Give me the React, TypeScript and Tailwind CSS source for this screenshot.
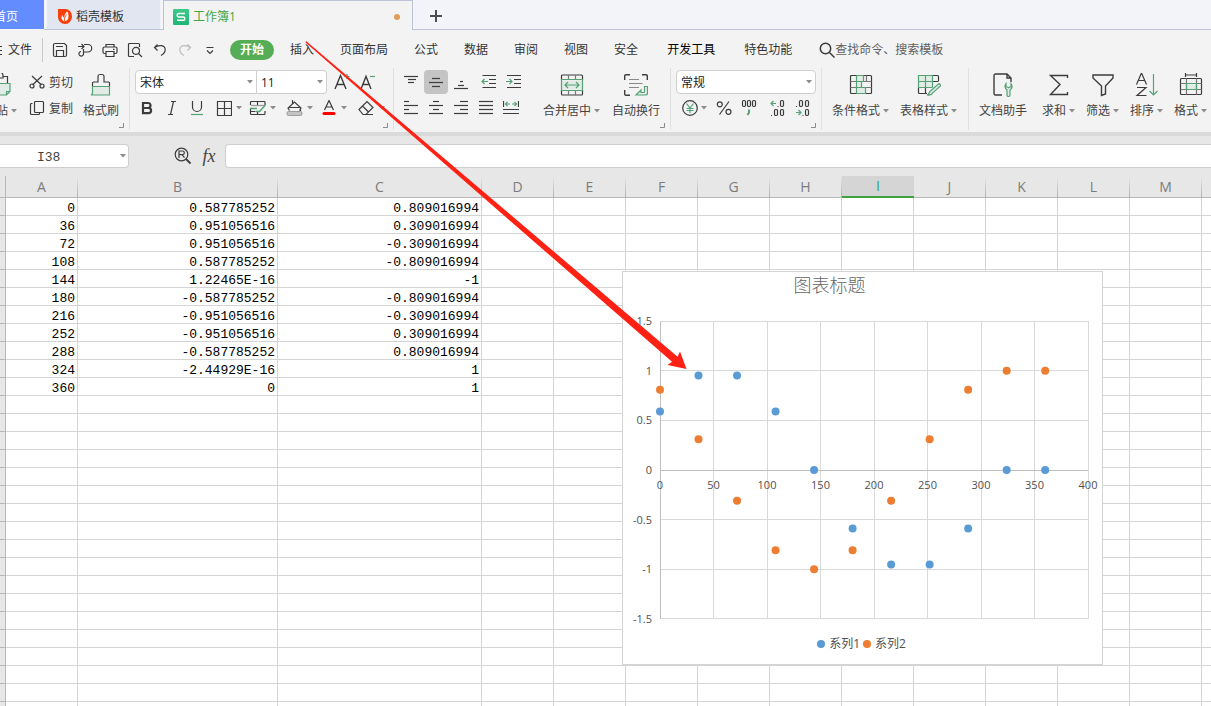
import React from "react";

const INK = "#3c3c3c";
const GREEN = "#55a277";
const TINT = "#e3ebe6";

type IconProps = { w?: number; h?: number; children: React.ReactNode };

function Icon({ w = 16, h = 16, children }: IconProps) {
  return (
    <svg
      width={w}
      height={h}
      viewBox={`0 0 ${w} ${h}`}
      fill="none"
      stroke={INK}
      strokeWidth={1.2}
      className="shrink-0"
      aria-hidden="true"
    >
      {children}
    </svg>
  );
}

function Caret() {
  return (
    <svg width="6" height="4" viewBox="0 0 6 4" fill="#8c8c8c" className="shrink-0" aria-hidden="true">
      <path d="M0 0h6L3 3.5z" />
    </svg>
  );
}

/* ---------- title tabs ---------- */

function TabBar() {
  return (
    <div role="tablist" className="flex h-[30px] shrink-0 bg-[#f2f4f9] text-xs">
      <button
        role="tab"
        aria-selected="false"
        className="mb-px flex w-11 items-center justify-end overflow-hidden bg-[#638dff] pt-1 pr-[26px] whitespace-nowrap text-white"
      >
        首页
      </button>
      <div className="w-[3px] border-b border-[#bcc3d7]" />
      <button
        role="tab"
        aria-selected="false"
        className="flex w-[113px] items-center gap-1 border-b border-[#bcc3d7] bg-[#e2e6f0] pt-1 pl-[11px] text-[#333]"
      >
        <svg width="14" height="15" viewBox="0 0 14 15" aria-hidden="true">
          <path d="M0 0h7.5a6.5 7.5 0 0 1 0 15H7a7 7 0 0 1-7-7z" fill="#f8400c" />
          <path d="M9.5 2.5C7 4 6 6.500 6.500 9 5.500 8.400 4.500 7.200 4.300 6 2.700 8.500 3.500 11.500 6.500 12.300 10.500 11.800 11.500 8 9.500 2.500z" fill="#fff" />
          <path d="M6.500 12.500V9l2-3.500" stroke="#f8400c" strokeWidth=".8" fill="none" />
        </svg>
        <span>稻壳模板</span>
      </button>
      <div className="w-[3px] border-b border-[#bcc3d7]" />
      <button
        role="tab"
        aria-selected="true"
        className="flex w-[250px] items-center gap-1 border-x border-t border-[#bcc3d7] bg-[#f3f3f3] pt-[3px] pr-3 pl-[9px] text-[#45a545]"
      >
        <svg width="16" height="16" viewBox="0 0 16 16" aria-hidden="true">
          <defs>
            <linearGradient id="sheetMark" x1="0" y1="0" x2="0" y2="1">
              <stop offset="0" stopColor="#3cca8a" />
              <stop offset="1" stopColor="#20b477" />
            </linearGradient>
          </defs>
          <rect width="16" height="16" rx="1" fill="url(#sheetMark)" />
          <path d="M12 4.500H5.500a1.200 1.200 0 0 0-1.200 1.200v1a1.200 1.200 0 0 0 1.200 1.200h5a1.200 1.200 0 0 1 1.200 1.200v1a1.200 1.200 0 0 1-1.200 1.200H4" fill="none" stroke="#fff" strokeWidth="1.500" />
        </svg>
        <span className="flex-1 text-left">工作簿1</span>
        <span className="size-1.5 rounded-full bg-[#e29d59]" />
      </button>
      <div className="flex flex-1 items-center border-b border-[#bcc3d7] pt-[3px] pl-4">
        <button aria-label="新建标签">
          <svg width="14" height="14" viewBox="0 0 14 14" stroke="#4d4d4d" strokeWidth="2" aria-hidden="true">
            <path d="M7 1v12M1 7h12" />
          </svg>
        </button>
      </div>
    </div>
  );
}

/* ---------- menu row ---------- */

const quickActions: { label: string; icon: React.ReactNode }[] = [
  {
    label: "保存",
    icon: (
      <Icon>
        <path d="M1.500 3a1.500 1.500 0 0 1 1.500-1.500h9.500l2 2V13a1.500 1.500 0 0 1-1.500 1.500H3A1.500 1.500 0 0 1 1.500 13zM4.500 14.500V8.500h7v6M4 4.500h7" />
      </Icon>
    ),
  },
  {
    label: "输出为PDF",
    icon: (
      <Icon>
        <path d="M1 4.500h6M4.500 2L7 4.500 4.500 7M7 2.500h4a3.700 3.700 0 0 1 0 7.500H6.500V7M6.500 10v1.500a2.300 2.300 0 1 1-2.500-2" />
      </Icon>
    ),
  },
  {
    label: "打印",
    icon: (
      <Icon>
        <path d="M4 5V2.500h8V5M3.500 11.500H2.500a1.500 1.500 0 0 1-1.500-1.500V6.500A1.500 1.500 0 0 1 2.500 5h11A1.500 1.500 0 0 1 15 6.500V10a1.500 1.500 0 0 1-1.500 1.500h-1M4 9.500h8v5H4zM11 7.300h1.500" />
      </Icon>
    ),
  },
  {
    label: "打印预览",
    icon: (
      <Icon>
        <path d="M7 14.500H2.500a1 1 0 0 1-1-1v-11a1 1 0 0 1 1-1h9a1 1 0 0 1 1 1V5M11.500 11.500l3.500 3.500" />
        <circle cx="9" cy="8.800" r="3.500" />
      </Icon>
    ),
  },
  {
    label: "撤销",
    icon: (
      <Icon>
        <path d="M5.500 2.500L2.500 5.500l3 3M2.500 5.500C7 2.500 13 3 13.200 7.500c.2 2.500-1.700 4.500-4.200 6" />
      </Icon>
    ),
  },
  {
    label: "恢复",
    icon: (
      <Icon>
        <path stroke="#bdbdbd" d="M10.500 2.500l3 3-3 3M13.500 5.500C9 2.500 3 3 2.800 7.500c-.2 2.500 1.700 4.500 4.200 6" />
      </Icon>
    ),
  },
  {
    label: "自定义快速访问工具栏",
    icon: (
      <Icon>
        <path d="M4.500 5.500h7M5 8.500l3 3 3-3" />
      </Icon>
    ),
  },
];

const menus = ["插入", "页面布局", "公式", "数据", "审阅", "视图", "安全"];

function MenuBar() {
  return (
    <div className="flex h-9 shrink-0 items-center overflow-hidden bg-[#f3f3f3] pt-[3px] text-xs whitespace-nowrap text-[#333]">
      <button className="flex items-center gap-[5px]">
        <svg width="3" height="12" viewBox="0 0 3 12" stroke={INK} aria-hidden="true">
          <path d="M0 2.500h2M0 6.500h2M0 10.500h2" />
        </svg>
        文件
      </button>
      <div className="ml-[10px] h-6 w-px bg-[#c9c9c9]" />
      <div className="ml-[9px] flex items-center gap-[9px]">
        {quickActions.map((a) => (
          <button key={a.label} aria-label={a.label}>
            {a.icon}
          </button>
        ))}
      </div>
      <button className="ml-3 h-5 w-11 rounded-full bg-[#55ae55] font-bold text-white">开始</button>
      <nav className="ml-[3px] flex">
        {menus.map((m) => (
          <button key={m} className="px-[13px]">
            {m}
          </button>
        ))}
        <button className="px-4 text-black">开发工具</button>
        <button className="px-[13px]">特色功能</button>
      </nav>
      <label className="ml-[14px] flex items-center">
        <Icon>
          <g strokeWidth="1.500">
            <circle cx="6.500" cy="6.500" r="5.200" />
            <path d="M10.500 10.500l5 5" />
          </g>
        </Icon>
        <input
          type="text"
          placeholder="查找命令、搜索模板"
          aria-label="查找命令、搜索模板"
          className="w-36 bg-transparent placeholder:text-[#606060] focus:outline-none"
        />
      </label>
    </div>
  );
}

/* ---------- ribbon ---------- */

function Group({ className, corner, children }: { className: string; corner?: boolean; children: React.ReactNode }) {
  return (
    <section className={`relative flex shrink-0 pt-1 ${className}`}>
      {children}
      {corner && (
        <svg
          width="5"
          height="5"
          viewBox="0 0 5 5"
          fill="none"
          stroke="#8a8a8a"
          className="absolute right-[5px] bottom-1"
          aria-hidden="true"
        >
          <path d="M4.500 0v4.500H0" />
        </svg>
      )}
    </section>
  );
}

function Divider() {
  return <div className="mt-0.5 h-[62px] w-px shrink-0 bg-[#e0e0e0]" />;
}

function Tool({ label, className, children }: { label: string; className: string; children: React.ReactNode }) {
  return (
    <button aria-label={label} className={`flex h-6 shrink-0 items-center justify-center ${className}`}>
      {children}
    </button>
  );
}

function BigTool({ label, caret, children }: { label: string; caret?: boolean; children: React.ReactNode }) {
  return (
    <button className="flex shrink-0 flex-col items-center gap-[5px] pt-[3px]">
      {children}
      <span className="flex items-center gap-[3px] leading-[17px] whitespace-nowrap">
        {label}
        {caret && <Caret />}
      </span>
    </button>
  );
}

function Dropdown({ label, value, className }: { label: string; value: string; className: string }) {
  return (
    <div className={`relative flex h-6 items-center border border-[#cfcfcf] bg-white ${className}`}>
      <select
        aria-label={label}
        defaultValue={value}
        className="h-full w-full appearance-none bg-transparent pt-0.5 pl-1 text-xs text-[#222] focus:outline-none"
      >
        <option>{value}</option>
      </select>
      <span className="pointer-events-none absolute right-[3px]">
        <Caret />
      </span>
    </div>
  );
}

function Lines({ rows, w = 14 }: { rows: [number, number, number][]; w?: number }) {
  return (
    <Icon w={w} h={16}>
      {rows.map(([y, a, b]) => (
        <path key={y} d={`M${a} ${y}.5H${b}`} />
      ))}
    </Icon>
  );
}

function ClipboardGroup() {
  return (
    <Group className="w-[129px]" corner>
      <button aria-label="粘贴" className="flex w-[17px] flex-col items-end gap-[5px] overflow-hidden pt-[3px]">
        <span className="-mr-0 block pr-[5px]">
          <Icon w={24} h={24}>
            <path d="M3.500 22V3.500H8M15 3.500h4.500V10M8 5V2.500a3 3 0 0 1 7 0V5z" />
            <path stroke={GREEN} fill={TINT} d="M8.500 10.500h13.500v8l-3.500 3.500H8.500zM18.500 22v-3.500H22" />
          </Icon>
        </span>
        <span className="flex items-center gap-[3px] leading-[17px] whitespace-nowrap">
          粘贴
          <Caret />
        </span>
      </button>
      <div className="ml-3 flex flex-col gap-0.5">
        <button className="flex h-6 items-center gap-1">
          <Icon>
            <path d="M3 2l9.500 9M13 2L3.500 11" />
            <circle cx="3" cy="12" r="2" />
            <circle cx="13" cy="12" r="2" />
          </Icon>
          <span className="pt-0.5">剪切</span>
        </button>
        <button className="flex h-6 items-center gap-1">
          <Icon>
            <rect x="5.500" y="1.500" width="9" height="11" rx="1" />
            <path d="M3.500 3.500h-1a1 1 0 0 0-1 1v9a1 1 0 0 0 1 1h7a1 1 0 0 0 1-1v-1" />
          </Icon>
          <span className="pt-0.5">复制</span>
        </button>
      </div>
      <div className="ml-[10px] flex">
        <BigTool label="格式刷">
          <Icon w={24} h={24}>
            <path fill={TINT} stroke="none" d="M3 13h18v9H3z" />
            <path d="M3.500 13v-3a1 1 0 0 1 1-1H9V3.500a2 2 0 0 1 2-2h2a2 2 0 0 1 2 2V9h4.500a1 1 0 0 1 1 1v3" />
            <path stroke={GREEN} d="M3.500 13.500h17v8.500H2c1-.5 1.500-1 1.500-2z" />
          </Icon>
        </BigTool>
      </div>
    </Group>
  );
}

function FontGroup() {
  return (
    <Group className="w-[263px] flex-col gap-0.5 pl-[5px]" corner>
      <div className="flex">
        <Dropdown label="字体" value="宋体" className="w-[122px] rounded-l" />
        <Dropdown label="字号" value="11" className="w-[70px] rounded-r border-l-0" />
        <Tool label="增大字号" className="ml-px w-[26px]">
          <Icon w={18} h={18}>
            <path strokeWidth="1.400" d="M3 16L8.500 2.500 14 16M5 11.500h7" />
            <path stroke={GREEN} d="M15 1v5M12.500 3.500h5" />
          </Icon>
        </Tool>
        <Tool label="减小字号" className="w-[26px]">
          <Icon w={18} h={18}>
            <path strokeWidth="1.400" d="M3 16L8 3.500 13 16M5 11.500h6" />
            <path stroke={GREEN} d="M12 3.500h5" />
          </Icon>
        </Tool>
      </div>
      <div className="flex">
        <Tool label="加粗" className="w-6">
          <Icon>
            <path strokeWidth="2.200" d="M4 3h5a2.400 2.400 0 0 1 0 5H4zM4 8h5.500a2.600 2.600 0 0 1 0 5.200H4z" />
          </Icon>
        </Tool>
        <Tool label="倾斜" className="w-[26px]">
          <Icon>
            <path d="M7 1.500h5M4 14.500h5M9.500 1.500l-3 13" />
          </Icon>
        </Tool>
        <Tool label="下划线" className="w-6">
          <Icon>
            <path d="M3.500 1v6a4.500 4.500 0 0 0 9 0V1" />
            <path stroke={GREEN} d="M2 14.500h12" />
          </Icon>
        </Tool>
        <Tool label="边框" className="ml-[5px] w-[29px] gap-1">
          <Icon>
            <path d="M1.500 1.500h14v14h-14zM8.500 1.500v14M1.500 8.500h14" />
          </Icon>
          <Caret />
        </Tool>
        <Tool label="绘图边框" className="ml-[5px] w-[29px] gap-1">
          <Icon w={17}>
            <path d="M16 5V2.500a1 1 0 0 0-1-1H2.500a1 1 0 0 0-1 1V5M8.500 1.500v4M1.500 8v5.500a1 1 0 0 0 1 1H15a1 1 0 0 0 1-1V11M1.500 11.500h5M8.500 11v3.500" />
            <path stroke="#999" d="M2 5.500h13" />
            <path stroke={GREEN} strokeWidth="1.500" d="M1 8.500h7M16.500 5l-6 6.500H7" />
          </Icon>
          <Caret />
        </Tool>
        <Tool label="填充颜色" className="ml-2 w-[29px] gap-1">
          <Icon w={17}>
            <path d="M3.500 10.500L2 8l6.500-6L15 8l-1.500 2.500M2.500 7.500h12M6.500 0v4M14.500 7.500V11" />
            <rect x="1" y="11.500" width="15" height="4" rx="1.500" fill="#c4c4c4" stroke="#8d8d8d" strokeWidth=".8" />
          </Icon>
          <Caret />
        </Tool>
        <Tool label="字体颜色" className="ml-[5px] w-[29px] gap-1">
          <Icon>
            <path d="M3.500 10L8 .5l4.500 9.500M5 7h6" />
            <path stroke="#fe0000" strokeWidth="3" strokeLinecap="round" d="M3 13.500h10" />
          </Icon>
          <Caret />
        </Tool>
        <Tool label="清除" className="ml-2 w-[29px] gap-1">
          <Icon w={18}>
            <path d="M2 9.500l8-8 6 6-7 7H6zM5.500 6l6 6M6 14.500h10" />
          </Icon>
          <Caret />
        </Tool>
      </div>
    </Group>
  );
}

function AlignGroup() {
  return (
    <Group className="w-[276px] pl-1" corner>
      <div className="flex flex-col gap-0.5">
        <div className="flex">
          <Tool label="顶端对齐" className="w-[26px]">
            <Lines rows={[[2, 0, 14], [5, 4, 12], [8, 4, 10]]} />
          </Tool>
          <Tool label="垂直居中" className="w-6 rounded bg-[#c4c4c4]">
            <Lines rows={[[4, 3, 11], [8, 0, 14], [12, 3, 11]]} />
          </Tool>
          <Tool label="底端对齐" className="w-[26px]">
            <Lines rows={[[7, 6, 9], [11, 4, 10], [14, 0, 14]]} />
          </Tool>
          <Tool label="减少缩进量" className="ml-[3px] w-6">
            <Icon>
              <path d="M1.500 1.500H15M8 5.500h7M8 9.500h7M1.500 13.500H15" />
              <path stroke={GREEN} d="M7 7.500H1M3.500 5L1 7.500 3.500 10" />
            </Icon>
          </Tool>
          <Tool label="增加缩进量" className="w-[26px]">
            <Icon>
              <path d="M1 1.500h14M8 5.500h7M8 9.500h7M1 13.500h14" />
              <path stroke={GREEN} d="M0 7.500h6M3.500 5L6 7.500 3.500 10" />
            </Icon>
          </Tool>
        </div>
        <div className="flex">
          <Tool label="左对齐" className="w-[26px]">
            <Lines rows={[[1, 0, 5], [5, 0, 14], [9, 0, 5], [13, 0, 14]]} />
          </Tool>
          <Tool label="水平居中" className="w-6">
            <Lines rows={[[1, 4, 10], [5, 0, 14], [9, 4, 10], [13, 0, 14]]} />
          </Tool>
          <Tool label="右对齐" className="w-[26px]">
            <Lines rows={[[1, 6, 14], [5, 0, 14], [9, 6, 14], [13, 0, 14]]} />
          </Tool>
          <Tool label="两端对齐" className="w-6">
            <Lines rows={[[1, 0, 14], [5, 0, 14], [9, 0, 14], [13, 0, 14]]} />
          </Tool>
          <Tool label="分散对齐" className="w-[26px]">
            <Icon>
              <path d="M.5 1v6M15.500 1v6M0 9.500h16M0 13.500h16" />
              <path stroke={GREEN} d="M2.500 4H7M9 4h4.500M4.500 2l-2 2 2 2M11.500 2l2 2-2 2" />
            </Icon>
          </Tool>
        </div>
      </div>
      <div className="ml-4 flex gap-3">
        <BigTool label="合并居中" caret>
          <Icon w={24} h={24}>
            <path stroke="none" fill={TINT} d="M1.500 7.500h21v9h-21z" />
            <path d="M1.500 7V3a1 1 0 0 1 1-1h19a1 1 0 0 1 1 1v4M1.500 17v4a1 1 0 0 0 1 1h19a1 1 0 0 0 1-1v-4" />
            <path stroke="#777" d="M8.500 2v5M15.500 2v5M8.500 17v5M15.500 17v5" />
            <path stroke={GREEN} d="M1.500 6.500h21v11h-21zM5 12h14M8 9l-3 3 3 3M16 9l3 3-3 3" />
          </Icon>
        </BigTool>
        <BigTool label="自动换行">
          <Icon w={24} h={24}>
            <path strokeWidth="1.400" d="M.7 7V3a1.300 1.300 0 0 1 1.300-1.300H6M18 1.700h4A1.300 1.300 0 0 1 23.300 3v4M.7 17v4A1.300 1.300 0 0 0 2 22.300h4" />
            <path stroke="#888" d="M5 6.500h10M5 10.500h13.500M5 14.500h10" />
            <path stroke={GREEN} fill={TINT} d="M20.500 13.500h3V20a2 2 0 0 1-2 2H12l5-5v2.500h2.500a1 1 0 0 0 1-1z" />
          </Icon>
        </BigTool>
      </div>
    </Group>
  );
}

function NumberGroup() {
  return (
    <Group className="w-[150px] flex-col gap-0.5 pl-[5px]" corner>
      <Dropdown label="数字格式" value="常规" className="w-[140px] rounded" />
      <div className="flex items-center">
        <Tool label="货币" className="w-[34px] gap-[3px] pl-[3px]">
          <Icon>
            <circle cx="8" cy="8" r="7.300" />
            <path stroke={GREEN} d="M4.500 3.500L8 8l3.500-4.500M4.500 8.500h7M4.500 10.500h7M8 8v5" />
          </Icon>
          <Caret />
        </Tool>
        <Tool label="百分比" className="ml-0.5 w-6">
          <Icon>
            <circle cx="3.800" cy="4.300" r="2.500" />
            <circle cx="12.500" cy="11.800" r="2.500" />
            <path d="M13 1.500L3.500 14.500" />
          </Icon>
        </Tool>
        <Tool label="千位分隔样式" className="w-[26px]">
          <Icon h={18}>
            <rect x="1.500" y="1.500" width="3" height="6" rx="1.200" />
            <rect x="6.500" y="1.500" width="3" height="6" rx="1.200" />
            <rect x="11.500" y="1.500" width="3" height="6" rx="1.200" />
            <path stroke={GREEN} strokeWidth="2" d="M8 10.500v3L6.500 16" />
          </Icon>
        </Tool>
        <Tool label="增加小数位数" className="ml-[3px] w-[26px]">
          <Icon h={18}>
            <path stroke={GREEN} d="M6 4.500H1M3.500 2L1 4.500 3.500 7" />
            <path d="M7.500 7.500h1M1 16.500h1" />
            <rect x="10.500" y="1.500" width="3" height="6" rx="1.200" />
            <rect x="4.500" y="10.500" width="3" height="6" rx="1.200" />
            <rect x="10.500" y="10.500" width="3" height="6" rx="1.200" />
          </Icon>
        </Tool>
        <Tool label="减少小数位数" className="w-6">
          <Icon h={18}>
            <path stroke={GREEN} d="M1 13.500h5M3.500 11L6 13.500 3.500 16" />
            <path d="M1 7.500h1M7.500 16.500h1" />
            <rect x="4.500" y="1.500" width="3" height="6" rx="1.200" />
            <rect x="10.500" y="1.500" width="3" height="6" rx="1.200" />
            <rect x="10.500" y="10.500" width="3" height="6" rx="1.200" />
          </Icon>
        </Tool>
      </div>
    </Group>
  );
}

function StyleGroup() {
  return (
    <Group className="w-[146px] gap-[11px] pl-[10px]">
      <BigTool label="条件格式" caret>
        <Icon w={24} h={24}>
          <path stroke="none" fill={TINT} d="M7.500 2.500h7v6h-2v6h4v6h-9z" />
          <rect x="1.500" y="2.500" width="21" height="18" rx="1" />
          <path stroke="#777" d="M1.500 8.500h21M1.500 14.500h21M17.500 2.500v6" />
          <path stroke={GREEN} d="M7.500 2.500v18M14.500 2.500v6h-7M12.500 8.500v6M7.500 14.500h9v6h-9M7.500 2.500h7" />
        </Icon>
      </BigTool>
      <BigTool label="表格样式" caret>
        <Icon w={24} h={24}>
          <path stroke="none" fill={TINT} d="M1.500 2.500h14v12h-14z" />
          <path d="M15.500 2.500h5a1 1 0 0 1 1 1V8M1.500 14.500v5a1 1 0 0 0 1 1H10M15.500 8.500h6M8.500 14.500v6" />
          <path stroke={GREEN} d="M1.500 14.500v-12h14v12M1.500 8.500h14M1.500 14.500h14M8.500 2.500v12" />
          <path stroke={GREEN} fill={TINT} d="M22 10.500l2 2-8 7c-1 2-3 3-6 2.500 2-.5 2-2.500 3.500-4z" />
        </Icon>
      </BigTool>
    </Group>
  );
}

function EditGroup() {
  return (
    <Group className="pl-[10px]">
      <BigTool label="文档助手">
        <Icon w={24} h={24}>
          <path strokeWidth="1.400" d="M11 22H4.500a1.500 1.500 0 0 1-1.500-1.500v-18A1.500 1.500 0 0 1 4.500 1H16l4 4v4M16 1v4h4" />
          <path stroke={GREEN} fill={TINT} d="M15 10.500c-1.500 2-1.300 5 1 6.500v5a1.500 1.500 0 0 0 3 0v-5c2.500-1.500 2.500-4.500 1-6.500v3.500h-1.500l-1 .8-1-.8H15z" />
        </Icon>
      </BigTool>
      <div className="ml-[15px] flex gap-[11px]">
        <BigTool label="求和" caret>
          <Icon w={24} h={24}>
            <path strokeWidth="1.400" d="M20.500 5V2.500h-17L13 11.500 3.500 21.500h17V19" />
          </Icon>
        </BigTool>
        <BigTool label="筛选" caret>
          <Icon w={24} h={24}>
            <path strokeWidth="1.400" d="M2 2h20v3l-7.500 8v8l-4 1.500V13L2 5z" />
          </Icon>
        </BigTool>
        <BigTool label="排序" caret>
          <Icon w={24} h={24}>
            <path d="M1.500 11.500L6.500 0l5 11.500M3.500 7.500h6.500M2 14.500h9L2 22.500h9.500" />
            <path stroke={GREEN} d="M18.500 1v21M14.500 18l4 4 4-4" />
          </Icon>
        </BigTool>
        <BigTool label="格式" caret>
          <Icon w={24} h={24}>
            <path stroke="none" fill={TINT} d="M7.500 11.500h10v5h-10z" />
            <path d="M6.500 0v4M17.500 0v4M6.500 2h11" />
            <rect x="1.500" y="5.500" width="21" height="16" rx="1" />
            <path stroke="#777" d="M7.500 5.500v16M17.500 5.500v16M1.500 10.500h21M1.500 16.500h21" />
            <path stroke={GREEN} d="M7.500 10.500h10v6h-10z" />
          </Icon>
        </BigTool>
      </div>
    </Group>
  );
}

function Ribbon() {
  return (
    <div className="shrink-0 border-b-4 border-[#dadada] bg-[#f3f3f3]">
      <div className="flex h-[66px] overflow-hidden text-xs text-[#444]">
        <ClipboardGroup />
        <Divider />
        <FontGroup />
        <Divider />
        <AlignGroup />
        <Divider />
        <NumberGroup />
        <Divider />
        <StyleGroup />
        <Divider />
        <EditGroup />
      </div>
    </div>
  );
}

/* ---------- formula bar ---------- */

function FormulaBar() {
  return (
    <div className="flex h-10 shrink-0 items-center bg-[#e7e7e7]">
      <div className="flex h-6 w-[129px] items-center rounded-r border border-l-0 border-[#cfcfcf] bg-white pr-0.5">
        <input
          aria-label="名称框"
          defaultValue="I38"
          className="min-w-0 flex-1 bg-transparent pt-[3px] pl-[37px] font-['Liberation_Mono',monospace] text-[13px] text-[#444] focus:outline-none"
        />
        <Caret />
      </div>
      <button aria-label="浏览公式结果" className="ml-[45px]">
        <Icon w={18} h={18}>
          <circle cx="7.500" cy="7.500" r="6.300" />
          <path d="M5 11V4h3.500a1.800 1.800 0 0 1 0 3.700H5M8 7.700l2.500 3" />
          <path strokeWidth="1.800" d="M12 12l4.500 4.500" />
        </Icon>
      </button>
      <button
        aria-label="插入函数"
        className="ml-[9px] w-4 font-['Liberation_Serif',serif] text-lg leading-5 text-[#444] italic"
      >
        fx
      </button>
      <input
        aria-label="编辑栏"
        className="ml-2 h-6 min-w-0 flex-1 rounded-l border border-r-0 border-[#cfcfcf] bg-white px-2 text-sm focus:outline-none"
      />
    </div>
  );
}

/* ---------- worksheet ---------- */

const columns = ["A", "B", "C", "D", "E", "F", "G", "H", "I", "J", "K", "L", "M"];
const activeColumn = "I";
const rowCount = 29;

const cells: string[][] = [
  ["0", "0.587785252", "0.809016994"],
  ["36", "0.951056516", "0.309016994"],
  ["72", "0.951056516", "-0.309016994"],
  ["108", "0.587785252", "-0.809016994"],
  ["144", "1.22465E-16", "-1"],
  ["180", "-0.587785252", "-0.809016994"],
  ["216", "-0.951056516", "-0.309016994"],
  ["252", "-0.951056516", "0.309016994"],
  ["288", "-0.587785252", "0.809016994"],
  ["324", "-2.44929E-16", "1"],
  ["360", "0", "1"],
];

function Grid() {
  return (
    <table className="w-full min-w-[1202px] table-fixed border-separate border-spacing-0">
      <colgroup>
        <col className="w-1.5" />
        <col className="w-[72px]" />
        <col className="w-[200px]" />
        <col className="w-[204px]" />
        {columns.slice(3).map((c) => (
          <col key={c} className="w-[72px]" />
        ))}
        <col />
      </colgroup>
      <thead>
        <tr className="h-[22px] font-['Open_Sans',sans-serif] text-sm leading-5 text-[#7c7c7c]">
          <th className="border-r border-b border-[#b8b8b8] bg-[#e7e7e7] p-0" aria-label="全选" />
          {columns.map((c) => (
            <th
              key={c}
              scope="col"
              className={
                c === activeColumn
                  ? "border-b-2 border-[#3fa23f] bg-[#d5d5d5] p-0 font-normal text-[#2aa876]"
                  : "relative border-b border-[#b8b8b8] bg-[#e7e7e7] p-0 pr-px font-normal after:absolute after:top-0 after:right-0 after:h-full after:w-px after:bg-linear-to-b after:from-[#e7e7e7] after:to-[#b0b0b0]"
              }
            >
              {c}
            </th>
          ))}
          <th className="border-b border-[#b8b8b8] bg-[#e7e7e7] p-0" aria-label="空白列" />
        </tr>
      </thead>
      <tbody>
        {Array.from({ length: rowCount }, (_, r) => (
          <tr
            key={r}
            className="h-[18px] font-['Liberation_Mono',monospace] text-[13px] leading-[13px] text-black"
          >
            <td className="border-r border-b border-[#b8b8b8] bg-[#e7e7e7] p-0" />
            {columns.map((c, i) => (
              <td key={c} className="border-r border-b border-[#d4d4d4] p-0 pt-1 pr-0.5 text-right">
                {cells[r]?.[i]}
              </td>
            ))}
            <td className="border-b border-[#d4d4d4] p-0" />
          </tr>
        ))}
      </tbody>
    </table>
  );
}

const X0 = 38;
const Y0 = 199;
const toX = (v: number) => X0 + v * 1.07;
const toY = (v: number) => Y0 - v * 99.3;

const angles = [0, 36, 72, 108, 144, 180, 216, 252, 288, 324, 360];
const seriesOne = [0.588, 0.951, 0.951, 0.588, 0, -0.588, -0.951, -0.951, -0.588, 0, 0];
const seriesTwo = [0.809, 0.309, -0.309, -0.809, -1, -0.809, -0.309, 0.309, 0.809, 1, 1];
const xTicks = [0, 50, 100, 150, 200, 250, 300, 350, 400];
const yTicks = [1.5, 1, 0.5, 0, -0.5, -1, -1.5];

function Chart() {
  return (
    <figure className="absolute top-[95px] left-[622px] border border-[#d4d4d4] bg-white">
      <figcaption className="absolute inset-x-0 top-0 pr-[66px] text-center text-lg leading-[27px] font-light text-[#666]">
        图表标题
      </figcaption>
      <svg
        width="479"
        height="392"
        viewBox="1 1 479 392"
        className="block font-['Open_Sans',sans-serif] text-[11px]"
        role="img"
        aria-label="图表标题"
      >
        <g stroke="#d9d9d9" shapeRendering="crispEdges">
          {xTicks.map((v) => (
            <line key={v} x1={toX(v)} x2={toX(v)} y1={toY(1.5)} y2={toY(-1.5)} />
          ))}
          {yTicks.map((v) => (
            <line key={v} x1={toX(0)} x2={toX(400)} y1={toY(v)} y2={toY(v)} />
          ))}
        </g>
        <g stroke="#bfbfbf" shapeRendering="crispEdges">
          <line x1={X0} x2={X0} y1={toY(1.5)} y2={toY(-1.5)} />
          <line x1={X0} x2={toX(400)} y1={Y0} y2={Y0} />
        </g>
        <g fill="#505050">
          {xTicks.map((v) => (
            <text key={v} x={toX(v)} y={Y0 + 19} textAnchor="middle">
              {v}
            </text>
          ))}
          {yTicks.map((v) => (
            <text key={v} x={30} y={toY(v) + 4} textAnchor="end">
              {v}
            </text>
          ))}
        </g>
        <g fill="#5b9bd5">
          {angles.map((a, i) => (
            <circle key={a} cx={toX(a)} cy={toY(seriesOne[i])} r="4" />
          ))}
        </g>
        <g fill="#ed7d31">
          {angles.map((a, i) => (
            <circle key={a} cx={toX(a)} cy={toY(seriesTwo[i])} r="4" />
          ))}
        </g>
      </svg>
      <div className="absolute inset-x-0 bottom-3 flex justify-center gap-[3px] pr-0.5 text-xs leading-4 text-[#505050]">
        <span className="flex items-center gap-1">
          <span className="size-2 rounded-full bg-[#5b9bd5]" />
          系列1
        </span>
        <span className="flex items-center gap-1">
          <span className="size-2 rounded-full bg-[#ed7d31]" />
          系列2
        </span>
      </div>
    </figure>
  );
}

export default function App() {
  return (
    <div className="relative flex h-screen flex-col overflow-hidden bg-white font-['Open_Sans','Noto_Sans_CJK_SC',sans-serif]">
      <TabBar />
      <MenuBar />
      <Ribbon />
      <FormulaBar />
      <main className="relative min-h-0 flex-1 overflow-hidden">
        <Grid />
        <Chart />
      </main>
      <svg
        width="400"
        height="340"
        viewBox="300 36 400 340"
        className="pointer-events-none absolute top-9 left-[300px]"
        aria-hidden="true"
      >
        <path
          d="M306 41L677.600 356.700 680 351.500 686.500 369 667.500 365 672 361.800 305.500 42.500z"
          fill="#ff2113"
        />
      </svg>
    </div>
  );
}
